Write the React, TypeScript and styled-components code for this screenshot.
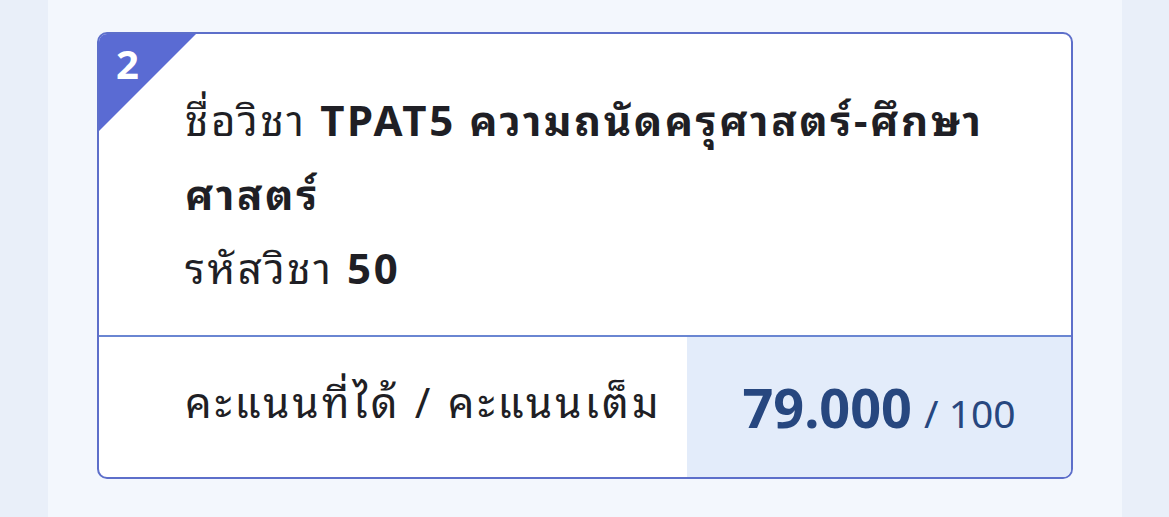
import React from "react";
import styled, { createGlobalStyle } from "styled-components";

const FONT = `"Noto Sans", "Noto Sans Thai Looped", "Noto Sans Thai", sans-serif`;

const GlobalStyle = createGlobalStyle`
  html, body {
    margin: 0;
    padding: 0;
    background: #e9eff9;
    font-family: ${FONT};
  }
`;

const Page = styled.div`
  display: flex;
  width: 1169px;
  height: 517px;
  overflow: hidden;
  background: #e9eff9;
`;

const Gutter = styled.div<{ $w: number }>`
  width: ${(p) => p.$w}px;
  flex: none;
  background: #e9eff9;
`;

const Panel = styled.main`
  flex: none;
  width: 1074px;
  box-sizing: border-box;
  padding: 32px 49px 0;
  background: #f3f7fd;
`;

const Card = styled.section`
  position: relative;
  display: flex;
  flex-direction: column;
  height: 447px;
  box-sizing: border-box;
  border: 2px solid #5d6fca;
  border-radius: 10px;
  background: #ffffff;
  overflow: hidden;
`;

const Corner = styled.div`
  position: absolute;
  top: 0;
  left: 0;
  width: 97px;
  height: 97px;
  background: #5a6bd3;
  clip-path: polygon(0 0, 100% 0, 0 100%);
`;

const CornerNumber = styled.span`
  position: absolute;
  top: 6px;
  left: 17px;
  color: #ffffff;
  font-size: 40px;
  font-weight: 700;
  line-height: 48px;
`;

const Info = styled.div`
  flex: none;
  height: 303px;
  box-sizing: border-box;
  padding: 49px 40px 0 86px;
  border-bottom: 2px solid #6a86d2;
  color: #1f1f25;
  font-size: 42px;
  letter-spacing: 2.6px;
  line-height: 74px;
`;

const Line = styled.div`
  margin: 0;
`;

const Strong = styled.b`
  font-weight: 700;
`;

const ScoreRow = styled.div`
  flex: 1;
  display: grid;
  grid-template-columns: 588px 1fr;
`;

const ScoreLabel = styled.div`
  display: flex;
  align-items: center;
  padding-left: 86px;
  padding-bottom: 16px;
  color: #1f1f25;
  font-size: 42px;
  letter-spacing: 3.2px;
`;

const ScoreValue = styled.div`
  display: flex;
  align-items: baseline;
  justify-content: center;
  padding-top: 33px;
  background: #e3ecfa;
  color: #27477f;
  gap: 12px;
`;

const Got = styled.span`
  font-size: 54px;
  font-weight: 700;
`;

const Full = styled.span`
  font-size: 39px;
`;

export default function App() {
  return (
    <>
      <GlobalStyle />
      <Page>
        <Gutter $w={48} />
        <Panel>
          <Card>
            <Corner>
              <CornerNumber>2</CornerNumber>
            </Corner>
            <Info>
              <Line>
                ชื่อวิชา <Strong>TPAT5 ความถนัดครุศาสตร์-ศึกษา<br />ศาสตร์</Strong>
              </Line>
              <Line>
                รหัสวิชา <Strong>50</Strong>
              </Line>
            </Info>
            <ScoreRow>
              <ScoreLabel>คะแนนที่ได้ / คะแนนเต็ม</ScoreLabel>
              <ScoreValue>
                <Got>79.000</Got>
                <Full>/ 100</Full>
              </ScoreValue>
            </ScoreRow>
          </Card>
        </Panel>
        <Gutter $w={47} />
      </Page>
    </>
  );
}
